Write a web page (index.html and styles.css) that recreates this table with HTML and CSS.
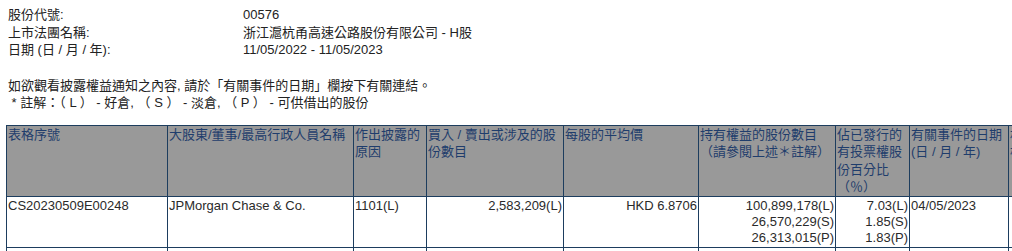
FILE: index.html
```html
<!DOCTYPE html>
<html lang="zh-Hant">
<head>
<meta charset="utf-8">
<link rel="stylesheet" href="styles.css">
</head>
<body>
<div class="page">
  <div class="info">
    <div class="info-row"><span class="label">股份代號:</span><span class="value">00576</span></div>
    <div class="info-row"><span class="label">上市法團名稱:</span><span class="value">浙江滬杭甬高速公路股份有限公司 - H股</span></div>
    <div class="info-row"><span class="label">日期 (日 / 月 / 年):</span><span class="value">11/05/2022 - 11/05/2023</span></div>
  </div>
  <div class="notes">
    <div class="note">如欲觀看披露權益通知之內容, 請於「有關事件的日期」欄按下有關連結。</div>
    <div class="note"> * 註解：（ L ） - 好倉, （ S ） - 淡倉, （ P ） - 可供借出的股份</div>
  </div>
  <div class="table-wrap">
    <table class="di">
      <colgroup>
        <col class="c1"><col class="c2"><col class="c3"><col class="c4"><col class="c5"><col class="c6"><col class="c7"><col class="c8"><col class="c9">
      </colgroup>
      <thead>
        <tr>
          <th>表格序號</th>
          <th>大股東/董事/最高行政人員名稱</th>
          <th>作出披露的<br>原因</th>
          <th>買入 / 賣出或涉及的股<br>份數目</th>
          <th>每股的平均價</th>
          <th>持有權益的股份數目<br>（請參閱上述＊註解）</th>
          <th>佔已發行的<br>有投票權股<br>份百分比<br>（％）</th>
          <th>有關事件的日期<br>(日 / 月 / 年)</th>
          <th>相聯法團<br>權益</th>
        </tr>
      </thead>
      <tbody>
        <tr>
          <td>CS20230509E00248</td>
          <td>JPMorgan Chase &amp; Co.</td>
          <td>1101(L)</td>
          <td class="num">2,583,209(L)</td>
          <td class="num">HKD 6.8706</td>
          <td class="num">100,899,178(L)<br>26,570,229(S)<br>26,313,015(P)</td>
          <td class="num">7.03(L)<br>1.85(S)<br>1.83(P)</td>
          <td>04/05/2023</td>
          <td></td>
        </tr>
        <tr>
          <td>CS20230508E00290</td>
          <td>BlackRock, Inc.</td>
          <td>1312(L)</td>
          <td class="num">1,000,000(L)</td>
          <td class="num"></td>
          <td class="num">101,394,895(L)</td>
          <td class="num">7.04(L)</td>
          <td>03/05/2023</td>
          <td></td>
        </tr>
      </tbody>
    </table>
  </div>
</div>
</body>
</html>
```
FILE: styles.css
```css
html, body {
  margin: 0;
  padding: 0;
  background: #ffffff;
  overflow: hidden;
}
body {
  font-family: "Liberation Sans", Arial, "Noto Sans CJK TC", sans-serif;
  font-size: 13px;
  color: #222222;
}
.page {
  padding: 6px 0 0 0;
}
.info {
  padding-left: 8px;
}
.info-row {
  display: flex;
  line-height: 17.5px;
  height: 17.5px;
}
.label {
  width: 235px;
  flex: none;
}
.notes {
  padding: 18px 0 0 8px;
}
.note {
  line-height: 17px;
  white-space: pre;
}
.table-wrap {
  margin-top: 14px;
  padding-left: 6px;
  width: 1100px;
}
.di {
  border-collapse: collapse;
  table-layout: fixed;
  width: 1090px;
}
.c1 { width: 161px; }
.c2 { width: 186px; }
.c3 { width: 73px; }
.c4 { width: 137px; }
.c5 { width: 135px; }
.c6 { width: 137px; }
.c7 { width: 74px; }
.c8 { width: 99px; }
.c9 { width: 88px; }
.di th, .di td {
  border: 1px solid #1d3d5e;
  padding: 0 0 0 1px;
  vertical-align: top;
  text-align: left;
  font-weight: normal;
  white-space: nowrap;
  overflow: hidden;
}
.di th {
  background: #999999;
  color: #1f3d6c;
  line-height: 17.5px;
  height: 69px;
}
.di td {
  color: #2a2a2a;
  line-height: 16px;
  height: 49px;
  padding-top: 1px;
}
.di td.num {
  text-align: right;
  padding-right: 1px;
}
```
